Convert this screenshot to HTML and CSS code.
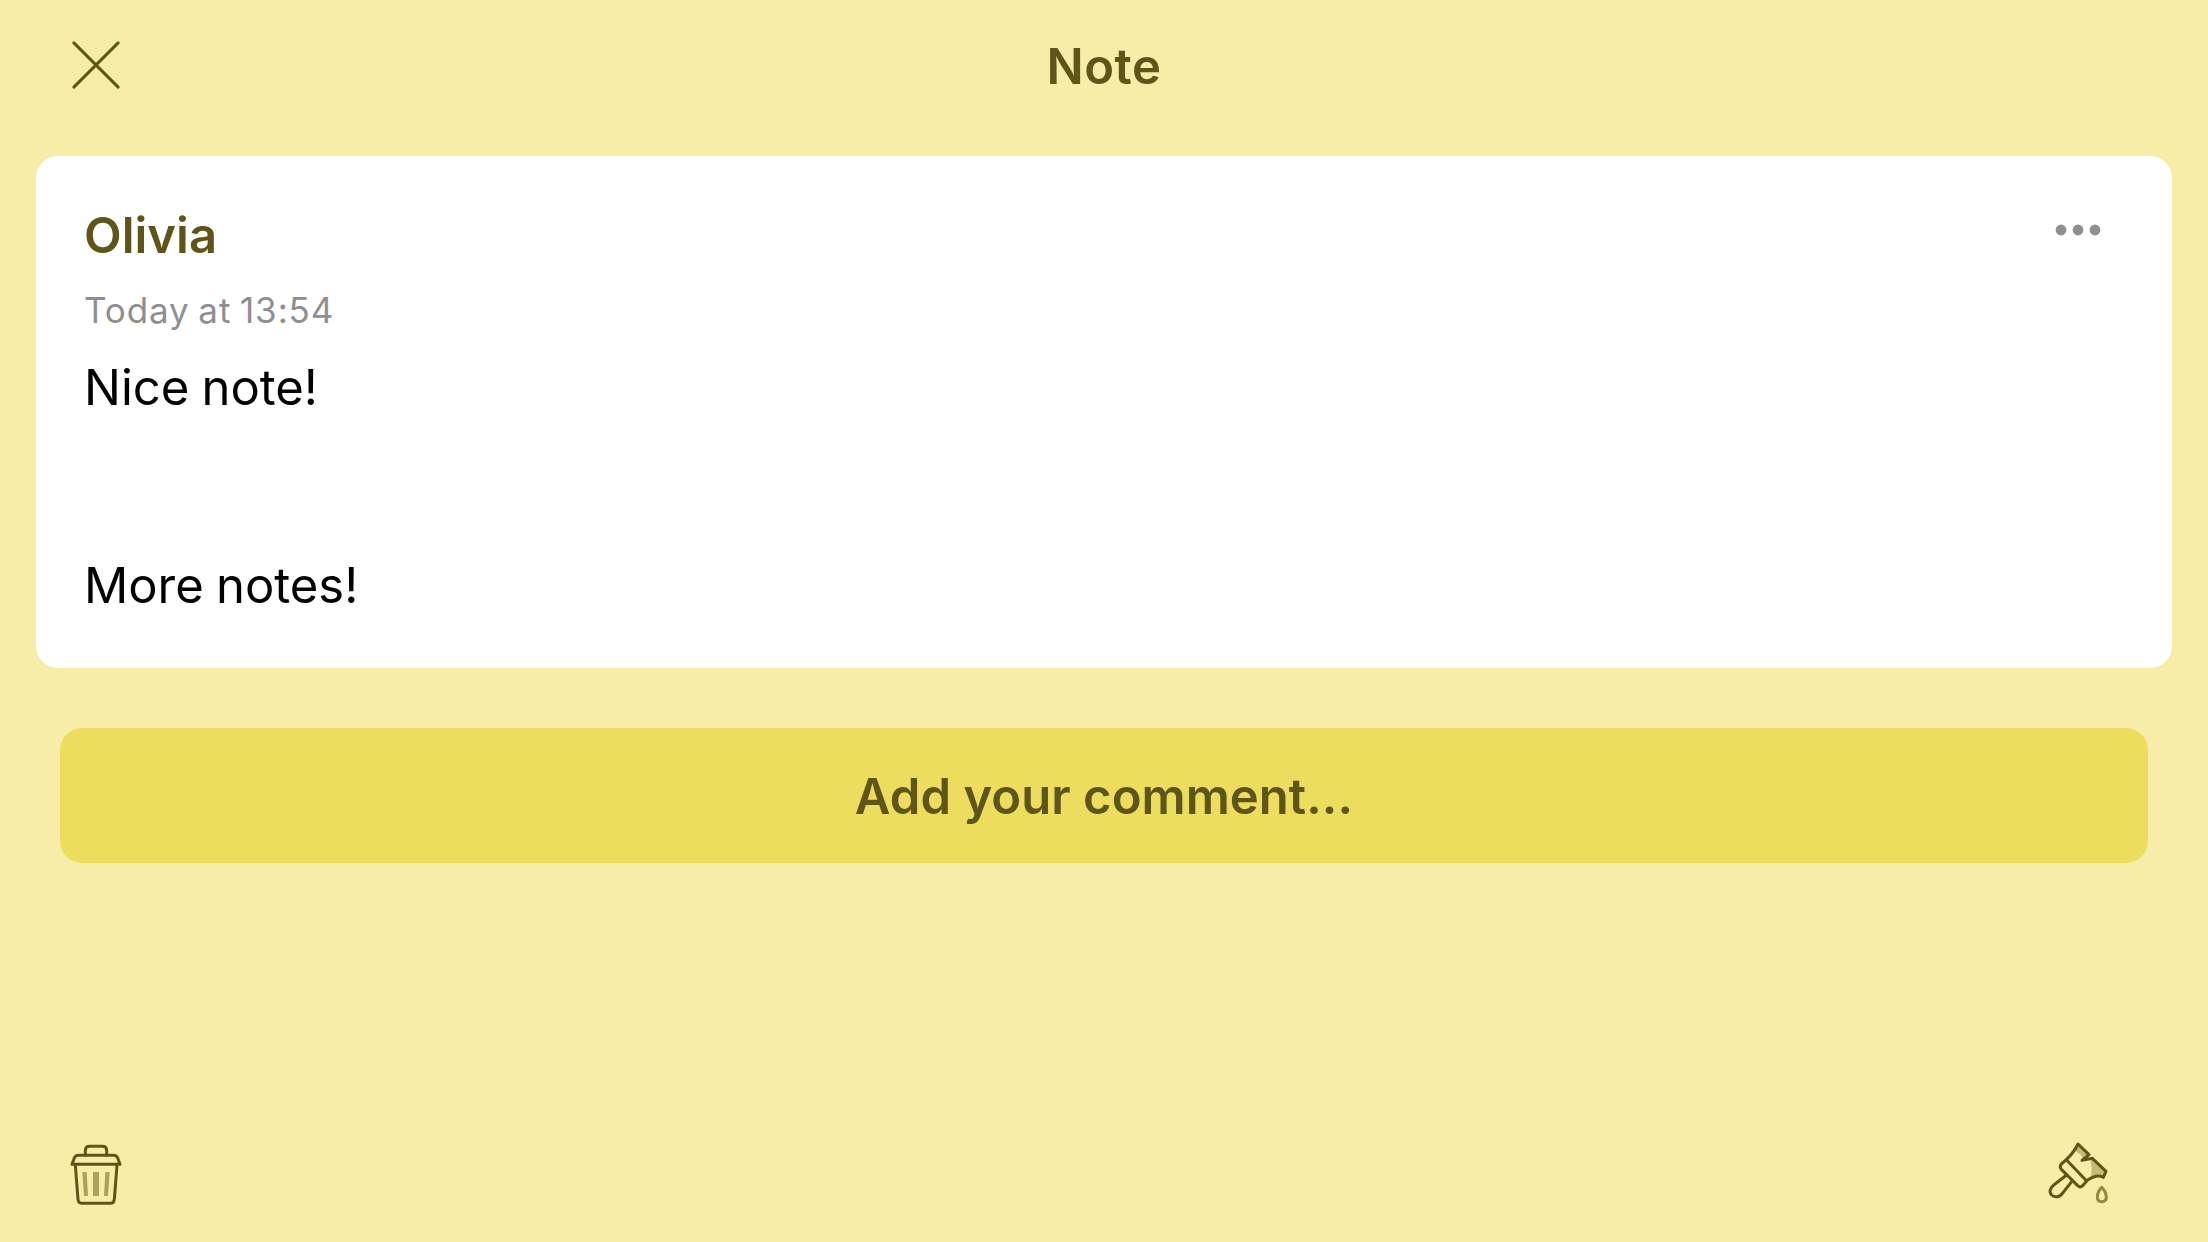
FILE: index.html
```
<!DOCTYPE html>
<html lang="en">
<head>
<meta charset="utf-8">
<title>Note</title>
<link rel="stylesheet" href="styles.css">
</head>
<body>
<div class="screen">
  <header class="header">
    <button class="icon-button" aria-label="Close">
      <svg class="icon-close" viewBox="0 0 48 48"><path d="M1.9 1.9 46.1 46.1M46.1 1.9 1.9 46.1"/></svg>
    </button>
    <h1 class="title">Note</h1>
    <div class="header-spacer"></div>
  </header>

  <main class="content">
    <article class="card">
      <div class="card-head">
        <h2 class="author">Olivia</h2>
        <button class="icon-button more" aria-label="More">
          <svg class="icon-more" viewBox="0 0 46 12"><circle cx="6" cy="6" r="5.4"/><circle cx="23" cy="6" r="5.4"/><circle cx="40" cy="6" r="5.4"/></svg>
        </button>
      </div>
      <time class="date">Today at 13:54</time>
      <p class="message">Nice note!


More notes!</p>
    </article>
    <button class="comment-button">Add your comment...</button>
  </main>

  <footer class="footer">
    <button class="icon-button" aria-label="Delete">
      <svg class="icon-trash" viewBox="36 36 168 198">
        <path class="soft-fill" d="M79 126H92L96 198H84ZM111 126H129V198H111ZM148 126H161L156 198H144Z"/>
        <path class="line" d="M88 76V62Q88 49 101 49H139Q152 49 152 62V76"/>
        <path class="line" d="M48 103H192L185 84Q182 76 173 76H67Q58 76 55 84Z"/>
        <path class="line" d="M58 105 66 208Q67 220 79 220H163Q174 220 175 208L183 105"/>
      </svg>
    </button>
    <button class="icon-button" aria-label="Change colour">
      <svg class="icon-brush" viewBox="45 42 198 201">
        <path class="soft-fill" d="M145 57 176 88 158 104Q158 88 134 77ZM180 102 187 100 228 139 220 155Q206 147 183 156 188 128 180 102Z"/>
        <path class="line" d="M109 104Q132 82 144 57L177 89 156 106 187 100 228 139 220 157Q202 145 168 168"/>
        <path class="line" d="M109 104 94 117Q87 125 94 133L143 182Q151 189 158 182L170 168Z"/>
        <path class="line" d="M110 150 75 177C60 188 56 201 65 210 75 219 90 217 99 203L125 170"/>
        <path class="drop" d="M215 187C207 195 202 208 202 217 202 226 207 230 215 230 223 230 229 226 229 217 229 208 223 195 215 187Z"/>
      </svg>
    </button>
  </footer>
</div>
</body>
</html>
```
FILE: styles.css
```
* {
  box-sizing: border-box;
}

body {
  margin: 0;
  background: #f7eda8;
  color: #5f5518;
  font-family: Inter, "Liberation Sans", sans-serif;
}

h1, h2, p {
  margin: 0;
}

button {
  border: 0;
  padding: 0;
  background: none;
  color: inherit;
  font: inherit;
}

svg {
  display: block;
}

.screen {
  display: flex;
  flex-direction: column;
  height: 1242px;
}

.header {
  display: grid;
  grid-template-columns: 1fr auto 1fr;
  align-items: start;
  height: 156px;
  padding: 36px 72px 0;
}

.header .icon-button {
  justify-self: start;
  padding-top: 5px;
}

.title {
  font-size: 49px;
  font-weight: 600;
  line-height: 61px;
  letter-spacing: 0.6px;
}

.icon-close {
  width: 48px;
  height: 48px;
  fill: none;
  stroke: #5f5518;
  stroke-width: 3;
  stroke-linecap: round;
}

.content {
  flex: 1;
  padding: 0 36px;
}

.card {
  height: 512px;
  padding: 49px 48px 0;
  border-radius: 22px;
  background: #fff;
}

.card-head {
  display: flex;
  justify-content: space-between;
  align-items: flex-start;
}

.author {
  font-size: 49px;
  font-weight: 600;
  line-height: 61px;
}

.more {
  padding: 19px 23px 0 0;
}

.icon-more {
  width: 46px;
  height: 12px;
  fill: #8e8e93;
}

.date {
  display: block;
  margin-top: 23px;
  color: #8e8e93;
  font-size: 35px;
  line-height: 42px;
  letter-spacing: 0.9px;
  word-spacing: -2px;
}

.message {
  margin-top: 24px;
  color: #000;
  font-size: 49px;
  line-height: 66px;
  letter-spacing: -0.03px;
  word-spacing: -1.5px;
  white-space: pre-line;
}

.comment-button {
  display: block;
  width: calc(100% - 48px);
  height: 135px;
  margin: 60px 24px 0;
  padding-top: 2px;
  border-radius: 22px;
  background: #eddd5e;
  font-size: 49px;
  font-weight: 600;
  line-height: 61px;
  letter-spacing: 0.03px;
}

.footer {
  display: flex;
  justify-content: space-between;
  align-items: flex-end;
  padding: 0 97px 34px 68px;
}

.icon-trash {
  width: 56px;
  height: 66px;
}

.icon-brush {
  width: 66px;
  height: 67px;
  margin-bottom: 2px;
}

.line,
.drop {
  fill: none;
  stroke: #5f5518;
  stroke-width: 9;
  stroke-linecap: round;
  stroke-linejoin: round;
}

.drop {
  stroke: #95893f;
}

.soft-fill {
  fill: #aba15f;
}

.icon-brush .soft-fill {
  fill: #c5ba76;
}
```
